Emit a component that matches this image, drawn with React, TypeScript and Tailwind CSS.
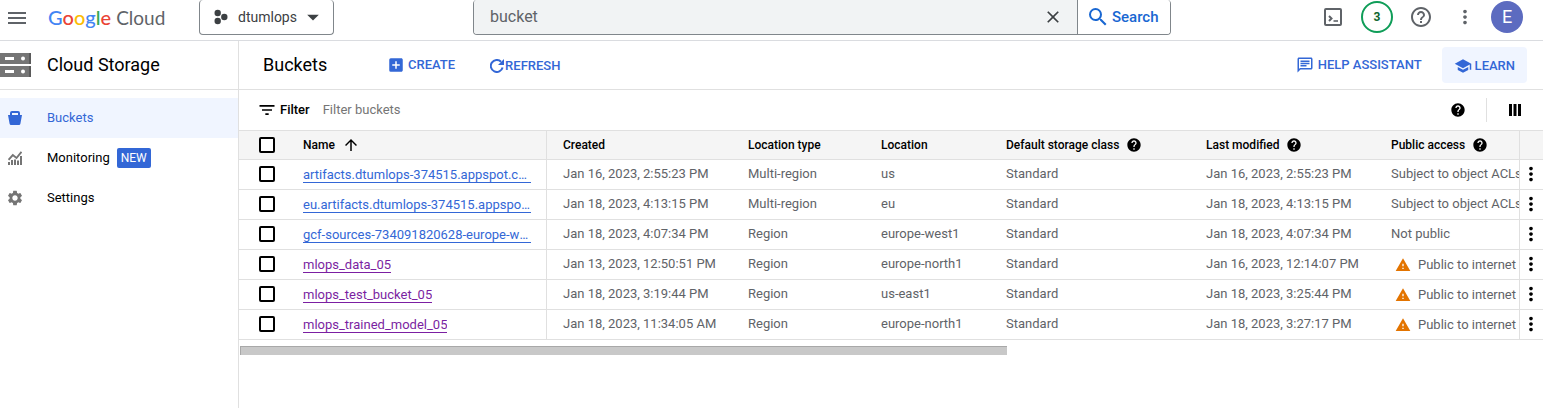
import type { ReactNode } from "react";
import {
  MdAddBox,
  MdArrowDropDown,
  MdArrowUpward,
  MdClose,
  MdFilterList,
  MdHelp,
  MdHelpOutline,
  MdMenu,
  MdMoreVert,
  MdOutlineChat,
  MdSchool,
  MdSearch,
  MdSettings,
  MdWarning,
} from "react-icons/md";

type Bucket = {
  name: string;
  created: string;
  locationType: string;
  location: string;
  modified: string;
  access: string;
  visited?: boolean;
};

const buckets: Bucket[] = [
  { name: "artifacts.dtumlops-374515.appspot.com", created: "Jan 16, 2023, 2:55:23 PM", locationType: "Multi-region", location: "us", modified: "Jan 16, 2023, 2:55:23 PM", access: "Subject to object ACLs" },
  { name: "eu.artifacts.dtumlops-374515.appspot.com", created: "Jan 18, 2023, 4:13:15 PM", locationType: "Multi-region", location: "eu", modified: "Jan 18, 2023, 4:13:15 PM", access: "Subject to object ACLs" },
  { name: "gcf-sources-734091820628-europe-west1", created: "Jan 18, 2023, 4:07:34 PM", locationType: "Region", location: "europe-west1", modified: "Jan 18, 2023, 4:07:34 PM", access: "Not public" },
  { name: "mlops_data_05", created: "Jan 13, 2023, 12:50:51 PM", locationType: "Region", location: "europe-north1", modified: "Jan 16, 2023, 12:14:07 PM", access: "Public to internet", visited: true },
  { name: "mlops_test_bucket_05", created: "Jan 18, 2023, 3:19:44 PM", locationType: "Region", location: "us-east1", modified: "Jan 18, 2023, 3:25:44 PM", access: "Public to internet", visited: true },
  { name: "mlops_trained_model_05", created: "Jan 18, 2023, 11:34:05 AM", locationType: "Region", location: "europe-north1", modified: "Jan 18, 2023, 3:27:17 PM", access: "Public to internet", visited: true },
];

function ProjectIcon() {
  return (
    <svg width="14" height="16" viewBox="0 0 14 16" fill="#3c4043" aria-hidden="true">
      <circle cx="3.7" cy="4" r="3.2" />
      <circle cx="3.7" cy="12" r="3.2" />
      <circle cx="10.3" cy="8" r="3.2" />
    </svg>
  );
}

function ShellIcon() {
  return (
    <svg width="18" height="18" viewBox="0 0 18 18" fill="none" stroke="#5f6368" strokeWidth="2" aria-hidden="true">
      <rect x="1" y="1" width="16" height="16" rx="1" />
      <path d="M5 8 7.500 10.500 5 13" strokeWidth="2" />
      <path d="M9.5 13h4.5" strokeWidth="1.6" />
    </svg>
  );
}

function StorageIcon() {
  return (
    <svg width="31" height="24" viewBox="0 0 31 24" aria-hidden="true">
      <path fill="#757575" d="M0 0h31v11H0zM0 13h31v11H0z" />
      <path fill="#5a5a5a" d="M29 0h2v11h-2zM29 13h2v11h-2z" />
      <path fill="#fff" d="M5 4h9v3H5zM5 17h9v3H5z" />
      <circle cx="23" cy="5.5" r="2" fill="#fff" />
      <circle cx="23" cy="18.5" r="2" fill="#fff" />
    </svg>
  );
}

function BucketIcon() {
  return (
    <svg width="14" height="14" viewBox="0 0 14 14" fill="#3367d6" aria-hidden="true">
      <path fillRule="evenodd" d="M4 0h6a2 2 0 0 1 2 2v2h2l-1.6 8.8A1.5 1.5 0 0 1 11 14H3a1.5 1.5 0 0 1-1.4-1.2L0 4h2V2a2 2 0 0 1 2-2Zm0 2v2h6V2Z" />
    </svg>
  );
}

function MonitoringIcon() {
  return (
    <svg width="14" height="14" viewBox="0 0 14 14" aria-hidden="true">
      <path fill="#757575" d="M0 11h2v3H0zM3 9h2v5H3zM6 8.500h2V14H6zM9 9.500h2V14H9zM12 5h2v9h-2z" />
      <path fill="none" stroke="#757575" strokeWidth="1.900" d="M.5 8.800 4.800 4 8.500 7 13.500.8" />
    </svg>
  );
}

function RefreshIcon() {
  return (
    <svg width="15" height="14" viewBox="0 0 15 14" aria-hidden="true">
      <path fill="none" stroke="#3367d6" strokeWidth="2" d="M12.600 8.500A6 6 0 1 1 11 2.700" />
      <path fill="#3367d6" d="M14 0v6H8z" />
    </svg>
  );
}

function ColumnsIcon() {
  return (
    <svg width="12" height="12" viewBox="0 0 12 12" aria-hidden="true">
      <path d="M0 0h3v12H0zM4.500 0h3v12h-3zM9 0h3v12H9z" />
    </svg>
  );
}

function Checkbox({ label }: { label: string }) {
  return (
    <input
      type="checkbox"
      aria-label={label}
      className="block size-4 appearance-none rounded-xs border-2 border-black bg-white checked:bg-black"
    />
  );
}

function HeadCell({ children, className = "" }: { children?: ReactNode; className?: string }) {
  return (
    <th scope="col" className={`h-[29px] overflow-hidden border-b border-[#e0e0e0] bg-[#f5f5f5] pl-4 text-left text-xs font-medium whitespace-nowrap text-black ${className}`}>
      <div className="flex items-center gap-[7px]">{children}</div>
    </th>
  );
}

function Cell({ children, className = "" }: { children?: ReactNode; className?: string }) {
  return (
    <td className={`h-[30px] overflow-hidden border-b border-[#e0e0e0] pb-0.5 pl-4 whitespace-nowrap ${className}`}>{children}</td>
  );
}

function TopBar() {
  return (
    <header className="flex h-[41px] items-start border-b border-[#dadce0] pr-5 text-[#5f6368]">
      <div className="flex w-[473px] shrink-0 items-center">
        <button type="button" aria-label="Main menu" className="ml-[5px] text-2xl">
          <MdMenu />
        </button>
        <a href="#home" className="ml-[19px] w-[151px] font-[Lato] text-xl leading-8 whitespace-nowrap">
          <span className="font-medium">
            <span className="text-[#4285f4]">G</span>
            <span className="text-[#ea4335]">o</span>
            <span className="text-[#fbbc04]">o</span>
            <span className="text-[#4285f4]">g</span>
            <span className="text-[#34a853]">l</span>
            <span className="text-[#ea4335]">e</span>
          </span>{" "}
          <span className="text-[19px]">Cloud</span>
        </a>
        <button type="button" className="flex h-[35px] w-[135px] items-center rounded border border-t-0 border-[#80868b] pl-3.5 text-sm text-[#3c4043]">
          <ProjectIcon />
          <span className="ml-2.5">dtumlops</span>
          <MdArrowDropDown size={28} className="ml-0.5 shrink-0" />
        </button>
      </div>
      <form className="flex h-[35px] w-full max-w-[698px] overflow-hidden rounded border border-t-0 border-[#80868b]">
        <div className="flex flex-1 items-center bg-[#f1f3f4] pr-3.5">
          <input aria-label="Search" defaultValue="bucket" className="min-w-0 flex-1 bg-transparent pl-4 text-base outline-none" />
          <button type="button" aria-label="Clear search" className="text-[#3c4043]">
            <MdClose size={20} />
          </button>
        </div>
        <button type="submit" className="flex w-[93px] items-center gap-0.5 border-l border-[#80868b] bg-white pl-2 text-[15px] font-medium text-[#1967d2]">
          <MdSearch size={24} />
          Search
        </button>
      </form>
      <div className="ml-auto flex h-[34px] shrink-0 items-center">
        <button type="button" aria-label="Activate Cloud Shell" className="flex w-11 justify-center">
          <ShellIcon />
        </button>
        <button type="button" aria-label="Notifications" className="flex w-11 justify-center">
          <span className="flex size-8 items-center justify-center rounded-full border-2 border-[#0f9d58] text-xs font-bold text-[#0d652d]">3</span>
        </button>
        <button type="button" aria-label="Help" className="flex w-11 justify-center">
          <MdHelpOutline size={24} />
        </button>
        <button type="button" aria-label="More options" className="flex w-11 justify-center">
          <MdMoreVert size={22} />
        </button>
        <button type="button" aria-label="Account" className="ml-1 size-8 rounded-full bg-[#5c6bc0] text-lg leading-8 text-white">
          E
        </button>
      </div>
    </header>
  );
}

function Sidebar() {
  return (
    <aside className="w-[239px] shrink-0 border-r border-[#e0e0e0]">
      <div className="flex h-[49px] items-center gap-4 border-b border-[#e0e0e0] text-lg">
        <StorageIcon />
        <h2>Cloud Storage</h2>
      </div>
      <nav className="flex flex-col pt-2 text-[13px]">
        <a href="#buckets" className="flex h-10 items-center gap-[25px] bg-[#f0f5ff] pl-2 text-[#3367d6]">
          <BucketIcon />
          Buckets
        </a>
        <a href="#monitoring" className="flex h-10 items-center gap-[25px] pl-2">
          <MonitoringIcon />
          <span className="flex items-center gap-[7px]">
            Monitoring
            <span className="rounded-xs bg-[#3367d6] px-1 text-xs leading-5 text-white">NEW</span>
          </span>
        </a>
        <a href="#settings" className="flex h-10 items-center gap-[23px] pl-1.5">
          <MdSettings size={18} className="text-[#757575]" />
          Settings
        </a>
      </nav>
    </aside>
  );
}

function BucketTable() {
  return (
    <table className="w-full table-fixed border-separate border-spacing-0 text-[13px] text-[#5f6368]">
      <colgroup>
        <col className="w-12" />
        <col className="w-[260px]" />
        <col className="w-[185px]" />
        <col className="w-[133px]" />
        <col className="w-[125px]" />
        <col className="w-[200px]" />
        <col className="w-[185px]" />
        <col />
        <col className="w-[23px]" />
      </colgroup>
      <thead>
        <tr>
          <HeadCell className="pl-5">
            <Checkbox label="Select all buckets" />
          </HeadCell>
          <HeadCell className="border-r">
            Name
            <MdArrowUpward size={18} />
          </HeadCell>
          <HeadCell>Created</HeadCell>
          <HeadCell>Location type</HeadCell>
          <HeadCell>Location</HeadCell>
          <HeadCell>
            Default storage class
            <MdHelp size={16} />
          </HeadCell>
          <HeadCell>
            Last modified
            <MdHelp size={16} />
          </HeadCell>
          <HeadCell className="border-r">
            Public access
            <MdHelp size={16} />
          </HeadCell>
          <HeadCell />
        </tr>
      </thead>
      <tbody>
        {buckets.map((b) => (
          <tr key={b.name}>
            <Cell className="pl-5">
              <Checkbox label={`Select ${b.name}`} />
            </Cell>
            <Cell className="border-r pr-[15px]">
              <a
                href={`#${b.name}`}
                className={`block w-fit max-w-full truncate border-b pt-0.5 leading-[15px] ${b.visited ? "border-[#7b1fa2] text-[#7b1fa2]" : "border-[#3367d6] text-[#3367d6]"}`}
              >
                {b.name}
              </a>
            </Cell>
            <Cell>{b.created}</Cell>
            <Cell>{b.locationType}</Cell>
            <Cell>{b.location}</Cell>
            <Cell>Standard</Cell>
            <Cell>{b.modified}</Cell>
            <Cell className="border-r">
              {b.access === "Public to internet" ? (
                <span className="flex items-center gap-[7px] pt-0.5 pl-1">
                  <MdWarning size={16} className="shrink-0 text-[#e37400]" />
                  {b.access}
                </span>
              ) : (
                b.access
              )}
            </Cell>
            <td className="border-b border-[#e0e0e0] pr-0.5 pb-0.5">
              <button type="button" aria-label={`Actions for ${b.name}`} className="flex w-full justify-center text-black">
                <MdMoreVert size={22} className="shrink-0" />
              </button>
            </td>
          </tr>
        ))}
      </tbody>
    </table>
  );
}

export default function App() {
  return (
    <div className="flex min-h-screen flex-col bg-white font-[Roboto,sans-serif] text-black">
      <TopBar />
      <div className="flex flex-1">
        <Sidebar />
        <main className="min-w-0 flex-1">
          <div className="flex h-[49px] items-center border-b border-[#e0e0e0] pr-4 pl-6 text-[13px] font-medium text-[#3367d6]">
            <h1 className="w-[124px] text-lg font-normal text-black">Buckets</h1>
            <button type="button" className="flex items-center gap-[3px]">
              <MdAddBox size={18} />
              CREATE
            </button>
            <button type="button" className="ml-[35px] flex items-center pt-0.5">
              <RefreshIcon />
              REFRESH
            </button>
            <button type="button" className="ml-auto flex items-center gap-1">
              <MdOutlineChat size={18} />
              HELP ASSISTANT
            </button>
            <button type="button" className="ml-5 flex h-9 items-center gap-[3px] rounded bg-[#f0f5ff] px-3 pt-0.5">
              <MdSchool size={18} />
              LEARN
            </button>
          </div>
          <div className="flex h-[41px] items-center border-b border-[#e0e0e0] pr-[22px] pl-[18px] text-[13px]">
            <MdFilterList size={20} />
            <label htmlFor="filter" className="ml-[3px] font-medium">Filter</label>
            <input id="filter" placeholder="Filter buckets" className="ml-[13px] min-w-0 flex-1 outline-none placeholder:text-[#757575]" />
            <button type="button" aria-label="Filter help">
              <MdHelp size={16} />
            </button>
            <span className="mr-[22px] ml-5 h-6 border-l border-[#e0e0e0]" />
            <button type="button" aria-label="Column display options">
              <ColumnsIcon />
            </button>
          </div>
          <BucketTable />
          <div className="mt-1.5 ml-px h-[9px] w-[58.8%] border-t border-l border-[#a8a8a8] bg-[#c8c8c8]" />
        </main>
      </div>
    </div>
  );
}
